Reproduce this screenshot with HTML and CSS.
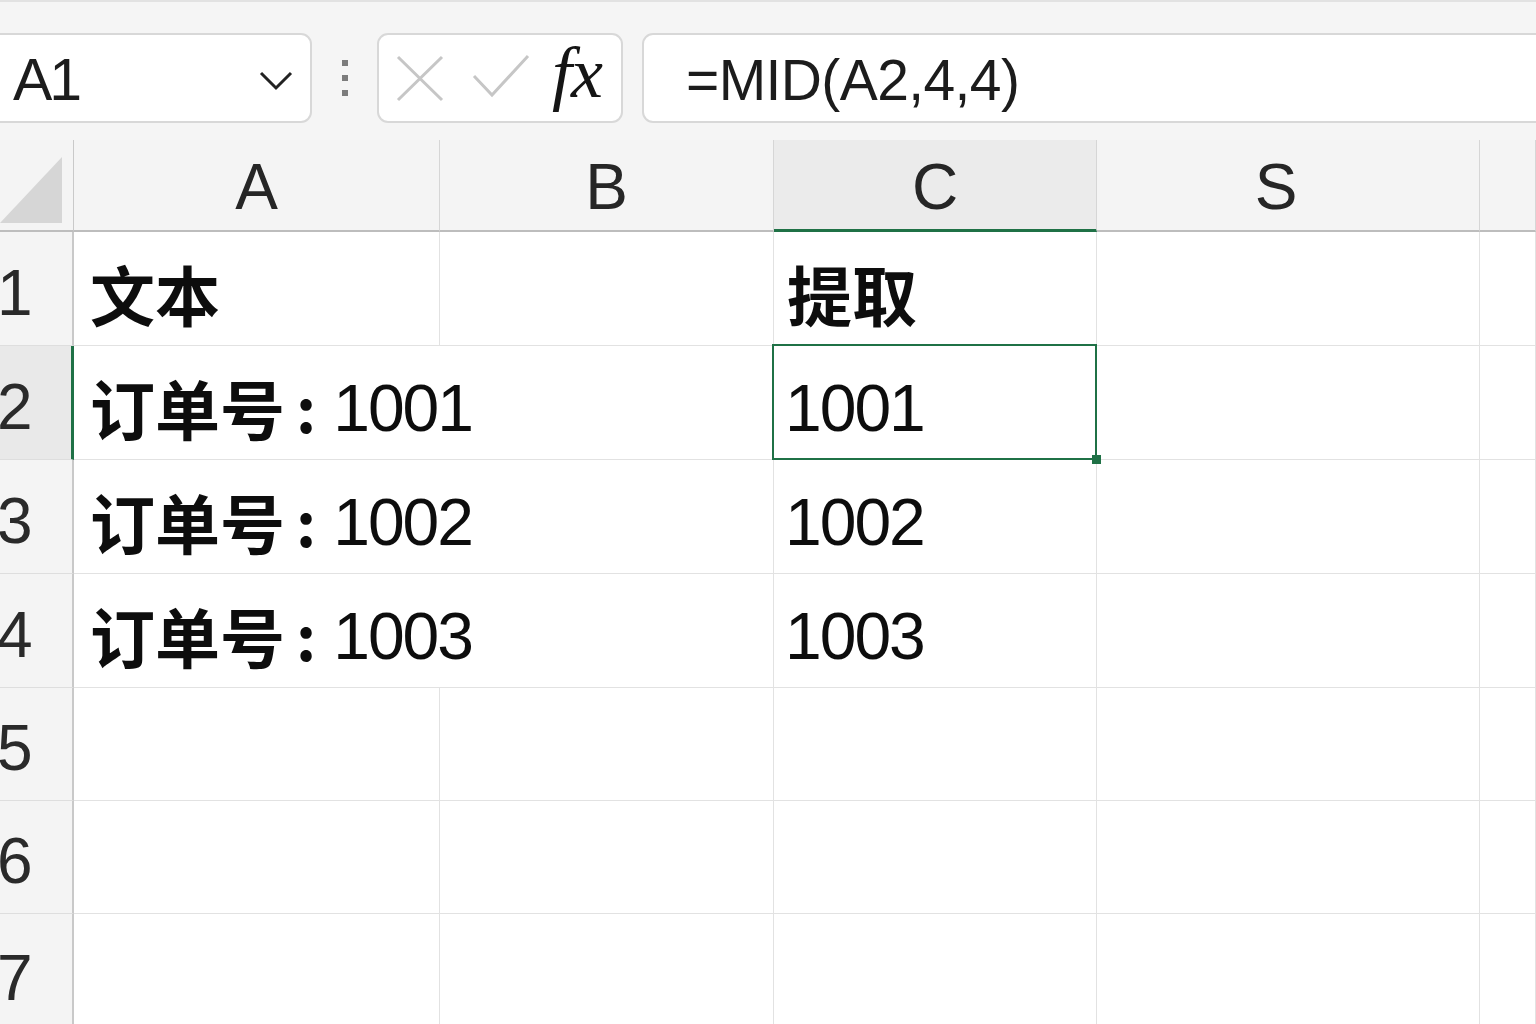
FILE: index.html
```html
<!DOCTYPE html>
<html lang="zh-CN">
<head>
<meta charset="utf-8">
<title>MID</title>
<link rel="stylesheet" href="styles.css">
</head>
<body>
<div class="toolbar">
  <div class="namebox">
    <span class="ref">A1</span>
    <svg class="chev" width="34" height="22" viewBox="0 0 34 22"><polyline points="2,3 17,18 32,3" fill="none" stroke="#222" stroke-width="3"/></svg>
  </div>
  <div class="dots"><i></i><i></i><i></i></div>
  <div class="btnbox">
    <svg class="xicon" width="48" height="48" viewBox="0 0 48 48"><path d="M2 2 L46 45 M46 2 L2 45" stroke="#c6c6c6" stroke-width="3" fill="none"/></svg>
    <svg class="check" width="58" height="46" viewBox="0 0 58 46"><polyline points="2,22 20,41 56,2" stroke="#c6c6c6" stroke-width="3" fill="none"/></svg>
    <span class="fx">fx</span>
  </div>
  <div class="formula"><span>=MID(A2,4,4)</span></div>
</div>
<div class="sheet">
  <div class="corner"><svg width="62" height="66" viewBox="0 0 62 66"><polygon points="62,0 62,66 0,66" fill="#d6d6d6"/></svg></div>
  <div class="ch">A</div>
  <div class="ch">B</div>
  <div class="ch selcol">C</div>
  <div class="ch chs">S</div>
  <div class="ch"></div>

  <div class="rh">1</div>
  <div class="cell pa"><span class="cjk">文本</span></div>
  <div class="cell"></div>
  <div class="cell pc"><span class="cjk">提取</span></div>
  <div class="cell"></div>
  <div class="cell"></div>

  <div class="rh selrow">2</div>
  <div class="cell pa span2"><span class="cjk">订单号</span><span class="colon">:</span><span class="num">1001</span></div>
  <div class="cell pn sel"><span class="num">1001</span><span class="handle"></span></div>
  <div class="cell"></div>
  <div class="cell"></div>

  <div class="rh">3</div>
  <div class="cell pa span2"><span class="cjk">订单号</span><span class="colon">:</span><span class="num">1002</span></div>
  <div class="cell pn"><span class="num">1002</span></div>
  <div class="cell"></div>
  <div class="cell"></div>

  <div class="rh">4</div>
  <div class="cell pa span2"><span class="cjk">订单号</span><span class="colon">:</span><span class="num">1003</span></div>
  <div class="cell pn"><span class="num">1003</span></div>
  <div class="cell"></div>
  <div class="cell"></div>

  <div class="rh">5</div>
  <div class="cell"></div><div class="cell"></div><div class="cell"></div><div class="cell"></div><div class="cell"></div>
  <div class="rh">6</div>
  <div class="cell"></div><div class="cell"></div><div class="cell"></div><div class="cell"></div><div class="cell"></div>
  <div class="rh">7</div>
  <div class="cell"></div><div class="cell"></div><div class="cell"></div><div class="cell"></div><div class="cell"></div>
</div>
</body>
</html>
```

FILE: styles.css
```css
* { box-sizing: border-box; }
html, body {
  margin: 0;
  padding: 0;
  width: 1536px;
  height: 1024px;
  overflow: hidden;
  background: #f5f5f5;
  font-family: "Liberation Sans", Arial, "Noto Sans CJK SC", sans-serif;
  color: #1a1a1a;
}
.toolbar {
  height: 140px;
  border-top: 2px solid #e2e2e2;
  padding-top: 31px;
  display: flex;
  align-items: flex-start;
  background: #f5f5f5;
  overflow: hidden;
}
.namebox, .btnbox, .formula {
  height: 90px;
  background: #fff;
  border: 2px solid #d8d8d8;
  border-radius: 11px;
  display: flex;
  align-items: center;
  flex-shrink: 0;
}
.namebox {
  flex: 0 0 322px;
  margin-left: -10px;
  padding-left: 21px;
  padding-right: 17px;
  justify-content: space-between;
}
.ref {
  font-size: 59px;
  letter-spacing: -3px;
  color: #1c1c1c;
  line-height: 1;
  padding-top: 4px;
}
.chev { margin-top: 6px; }
.dots {
  flex: 0 0 65px;
  height: 90px;
  display: flex;
  flex-direction: column;
  align-items: center;
  justify-content: center;
  gap: 9px;
}
.dots i {
  display: block;
  width: 6px;
  height: 6px;
  background: #7c7c7c;
}
.btnbox {
  flex: 0 0 246px;
  padding-left: 17px;
}
.xicon { margin-top: 2px; flex-shrink: 0; }
.check { margin-left: 28px; margin-top: -2px; flex-shrink: 0; }
.fx {
  font-family: "Liberation Serif", "Times New Roman", serif;
  font-style: italic;
  font-size: 72px;
  color: #151515;
  margin-left: 22px;
  margin-top: -10px;
  letter-spacing: -1px;
  line-height: 1;
}
.formula {
  margin-left: 19px;
  flex: 0 0 1000px;
  padding-left: 42px;
}
.formula span {
  font-size: 57px;
  letter-spacing: -0.6px;
  color: #1c1c1c;
  line-height: 1;
  padding-top: 4px;
}
.sheet {
  display: grid;
  grid-template-columns: 74px 366px 334px 323px 383px 1fr;
  grid-template-rows: 92px 114px 114px 114px 114px 113px 113px 120px;
  background: #fff;
}
.corner {
  background: #f4f4f4;
  border-right: 1px solid #c9c9c9;
  border-bottom: 2px solid #bdbdbd;
  padding-top: 17px;
}
.corner svg { display: block; }
.ch {
  background: #f4f4f4;
  border-right: 1px solid #d6d6d6;
  border-bottom: 2px solid #bdbdbd;
  display: flex;
  align-items: center;
  justify-content: center;
  font-size: 64px;
  color: #262626;
  padding-top: 4px;
}
.ch.chs { padding-right: 24px; }
.ch.selcol {
  background: #ebebeb;
  border-bottom: 3px solid #1f7146;
}
.rh {
  background: #f4f4f4;
  border-right: 2px solid #c9c9c9;
  border-bottom: 1px solid #dedede;
  display: flex;
  align-items: center;
  font-size: 64px;
  color: #2a2a2a;
  text-indent: -3px;
  padding-top: 8px;
}
.rh.selrow {
  background: #e9e9e9;
  border-right: 3px solid #1f7146;
}
.cell {
  border-right: 1px solid #e2e2e2;
  border-bottom: 1px solid #e2e2e2;
  display: flex;
  align-items: center;
  padding-top: 10px;
  white-space: nowrap;
  color: #0d0d0d;
}
.span2 { grid-column: span 2; }
.pa { padding-left: 16px; }
.pc { padding-left: 13px; }
.pn { padding-left: 11px; }
.cjk {
  font-family: "Noto Sans CJK SC", sans-serif;
  font-weight: 700;
  font-size: 65px;
  line-height: 1;
}
.colon {
  font-family: "Noto Sans CJK SC", sans-serif;
  font-weight: 700;
  font-size: 62px;
  line-height: 1;
  padding-left: 11px;
  padding-right: 17px;
  margin-top: -4px;
}
.num {
  font-size: 66px;
  line-height: 1;
  letter-spacing: -2px;
}
.sel { position: relative; }
.sel::after {
  content: "";
  position: absolute;
  left: -2px;
  top: -2px;
  right: -1px;
  bottom: -1px;
  border: 2.5px solid #1f7146;
  pointer-events: none;
}
.handle {
  position: absolute;
  right: -5px;
  bottom: -5px;
  width: 9px;
  height: 9px;
  background: #1f7146;
  z-index: 2;
}
```
